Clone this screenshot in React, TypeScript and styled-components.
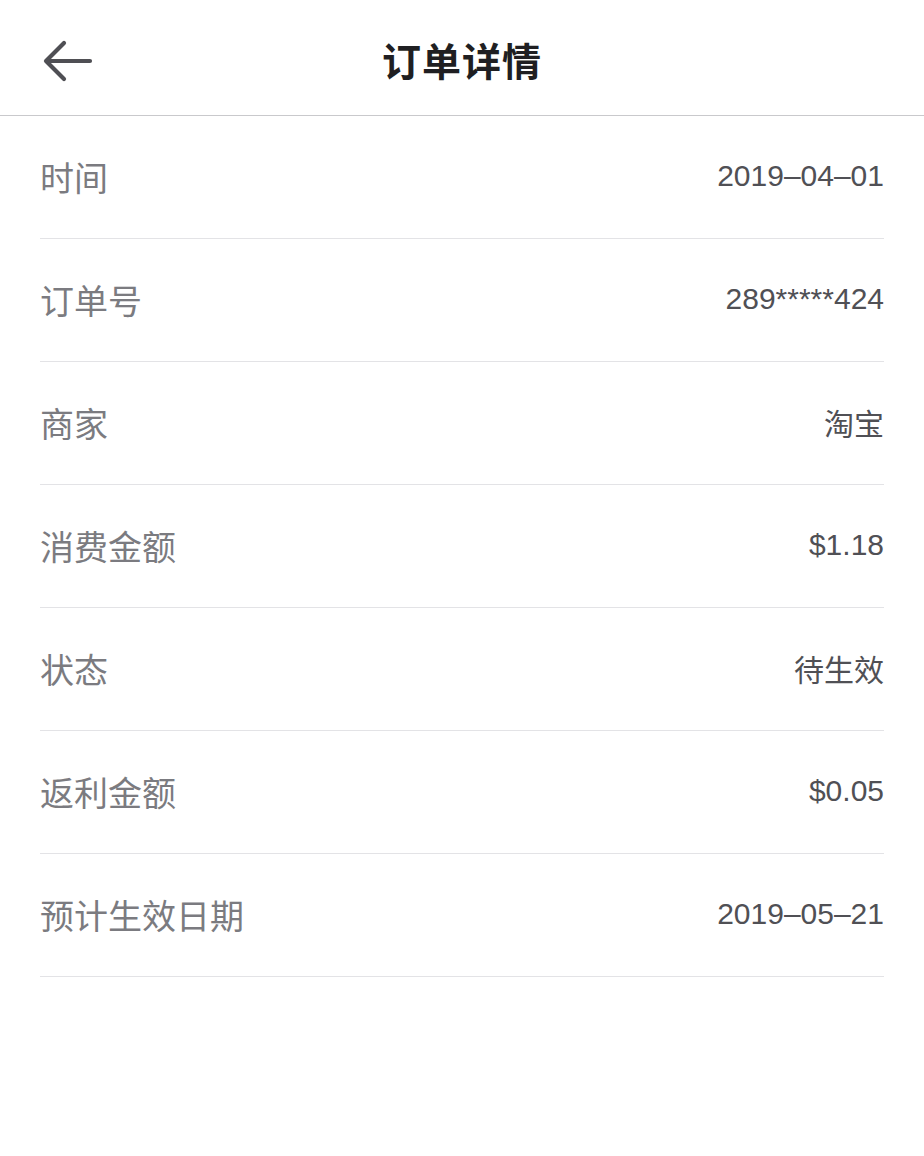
import React from 'react';
import styled, {createGlobalStyle} from 'styled-components';

const GlobalStyle = createGlobalStyle`
  html, body {
    margin: 0;
    padding: 0;
    background: #ffffff;
  }
  body {
    font-family: "Liberation Sans", "Noto Sans CJK SC", sans-serif;
  }
`

const Page = styled.div`
  width: 924px;
  min-height: 1156px;
  background: #ffffff;
`
const Header = styled.header`
  height: 115px;
  display: flex;
  align-items: center;
  justify-content: center;
  position: relative;
  border-bottom: 1px solid #c9c9cc;
`
const BackButton = styled.button`
  position: absolute;
  left: 36px;
  top: 29px;
  width: 64px;
  height: 64px;
  padding: 0;
  border: none;
  background: none;
  display: flex;
  align-items: center;
  justify-content: center;
  cursor: pointer;
`
const Title = styled.h1`
  margin: 0;
  margin-top: 2px;
  font-size: 39px;
  font-weight: 700;
  color: #1f1f22;
  letter-spacing: 1px;
  font-family: "Noto Sans CJK SC", sans-serif;
`
const List = styled.ul`
  list-style: none;
  margin: 0;
  padding: 0 40px;
`
const Row = styled.li`
  height: 122px;
  display: flex;
  align-items: center;
  justify-content: space-between;
  border-bottom: 1px solid #e3e3e6;
`
const Label = styled.span`
  font-size: 34px;
  color: #7b7b80;
  font-family: "Noto Sans CJK SC", sans-serif;
  margin-top: -2px;
`
const Value = styled.span`
  font-size: 30px;
  color: #505055;
  margin-top: -2px;
`

const rows = [
    {label: '时间', value: '2019–04–01'},
    {label: '订单号', value: '289*****424'},
    {label: '商家', value: '淘宝'},
    {label: '消费金额', value: '$1.18'},
    {label: '状态', value: '待生效'},
    {label: '返利金额', value: '$0.05'},
    {label: '预计生效日期', value: '2019–05–21'},
];

const App = () => {
    return (
        <Page>
            <GlobalStyle/>
            <Header>
                <BackButton aria-label="back">
                    <svg width="52" height="46" viewBox="0 0 52 46" fill="none">
                        <path d="M48 23H5M22 5L4 23l18 18" stroke="#4f4f54" strokeWidth="4.2"
                              strokeLinecap="round" strokeLinejoin="round"/>
                    </svg>
                </BackButton>
                <Title>订单详情</Title>
            </Header>
            <List>
                {rows.map(r => (
                    <Row key={r.label}>
                        <Label>{r.label}</Label>
                        <Value>{r.value}</Value>
                    </Row>
                ))}
            </List>
        </Page>
    );
};

export default App;
